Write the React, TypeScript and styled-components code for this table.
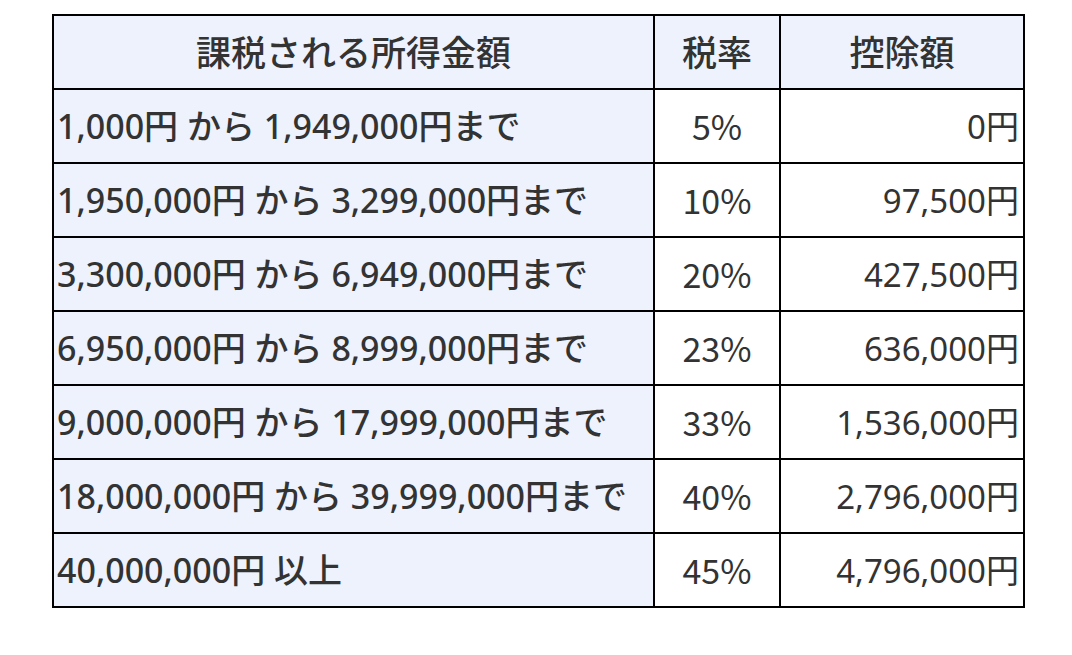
import styled, { createGlobalStyle } from 'styled-components';

const rows = [
  { range: '1,000円 から 1,949,000円まで', rate: '5%', deduction: '0円' },
  { range: '1,950,000円 から 3,299,000円まで', rate: '10%', deduction: '97,500円' },
  { range: '3,300,000円 から 6,949,000円まで', rate: '20%', deduction: '427,500円' },
  { range: '6,950,000円 から 8,999,000円まで', rate: '23%', deduction: '636,000円' },
  { range: '9,000,000円 から 17,999,000円まで', rate: '33%', deduction: '1,536,000円' },
  { range: '18,000,000円 から 39,999,000円まで', rate: '40%', deduction: '2,796,000円' },
  { range: '40,000,000円 以上', rate: '45%', deduction: '4,796,000円' },
];

const GlobalStyle = createGlobalStyle`
  html, body {
    margin: 0;
    padding: 0;
    background: #ffffff;
  }
  body {
    font-family: "Noto Sans", "Noto Sans CJK JP", sans-serif;
    color: #333333;
  }
`;

const App = () => {
  return (
    <>
      <GlobalStyle />
      <Page>
        <TaxTable>
          <colgroup>
            <col style={{ width: 601 }} />
            <col style={{ width: 126 }} />
            <col style={{ width: 244 }} />
          </colgroup>
          <thead>
            <tr>
              <HeadCell>課税される所得金額</HeadCell>
              <HeadCell>税率</HeadCell>
              <HeadCell>控除額</HeadCell>
            </tr>
          </thead>
          <tbody>
            {rows.map((row) => (
              <tr key={row.range}>
                <RangeCell>{row.range}</RangeCell>
                <RateCell>{row.rate}</RateCell>
                <AmountCell>{row.deduction}</AmountCell>
              </tr>
            ))}
          </tbody>
        </TaxTable>
      </Page>
    </>
  );
};

const Page = styled.div`
  padding: 14px 0 0 52px;
`;

const TaxTable = styled.table`
  border-collapse: collapse;
  table-layout: fixed;
  width: 971px;
  border: 2px solid #000;
  font-size: 33px;
  line-height: 1;
`;

const Cell = styled.td`
  height: 74px;
  padding: 0 4px;
  border: 2px solid #000;
  box-sizing: border-box;
  vertical-align: middle;
  white-space: nowrap;
  color: #333333;
  font-weight: 400;
`;

const HeadCell = styled(Cell).attrs({ as: 'th' })`
  background: #edf2fd;
  font-size: 35px;
  font-weight: 500;
  text-align: center;
`;

const RangeCell = styled(Cell)`
  background: #edf2fd;
  font-size: 34px;
  font-weight: 500;
  text-align: left;
  padding-left: 3px;
`;

const RateCell = styled(Cell)`
  font-family: "Noto Sans CJK JP", "Noto Sans", sans-serif;
  font-size: 34px;
  text-align: center;
`;

const AmountCell = styled(Cell)`
  text-align: right;
`;

export default App;
